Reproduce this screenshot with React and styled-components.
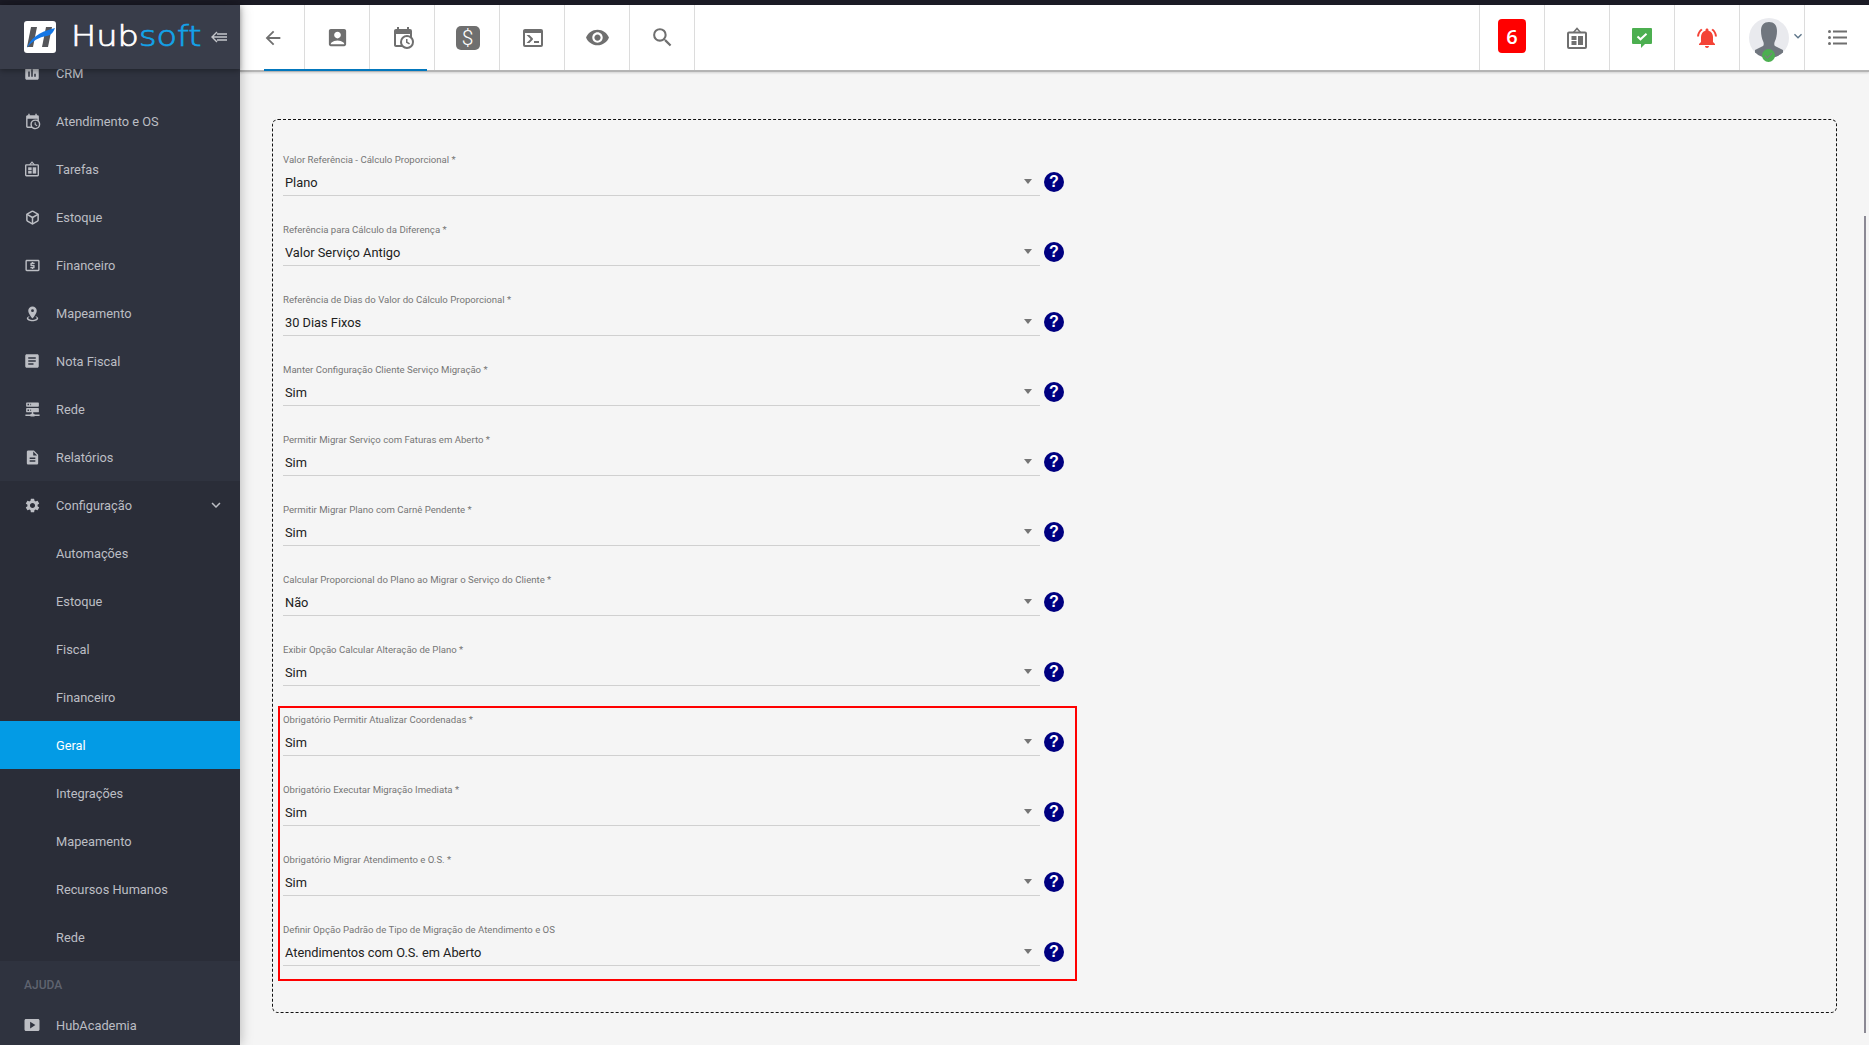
import React from 'react';
import styled, { createGlobalStyle } from 'styled-components';
import {
  MdAccountBox, MdArrowBack, MdArticle, MdDescription, MdInsertChart, MdKeyboardArrowDown,
  MdLocalAtm, MdNotificationsActive, MdSearch, MdSettings, MdSmartDisplay, MdVisibility,
} from 'react-icons/md';
import { Box } from 'lucide-react';

const GlobalStyle = createGlobalStyle`
  html, body {
    margin: 0;
    height: 100%;
    overflow: hidden;
    background: #f5f5f5;
    font-family: Roboto, sans-serif;
  }
  * { box-sizing: border-box; }
`;

const Page = styled.div`
  width: 1869px;
  height: 1045px;
  display: flex;
  flex-direction: column;
  overflow: hidden;
`;

const TopStrip = styled.div`
  height: 5px;
  flex: none;
  background: #1b1b25;
`;

const Body = styled.div`
  flex: 1;
  display: flex;
  min-height: 0;
`;

/* sidebar */
const Sidebar = styled.aside`
  width: 240px;
  flex: none;
  display: flex;
  flex-direction: column;
  background: #2f333f;
  box-shadow: 0 0 12px rgba(0, 0, 0, 0.28);
  position: relative;
  z-index: 2;
`;

const Brand = styled.div`
  height: 64px;
  flex: none;
  display: flex;
  align-items: center;
  padding-left: 24px;
  background: #393d4a;
  box-shadow: 0 2px 5px rgba(0, 0, 0, 0.3);
  position: relative;
  z-index: 1;
`;

const BrandName = styled.span`
  margin-left: 15px;
  width: 140px;
  flex: none;
  font-family: 'DejaVu Sans', sans-serif;
  font-weight: 200;
  font-size: 28px;
  line-height: 32px;
  color: #fff;
  white-space: nowrap;
  transform: scaleX(1.2);
  transform-origin: left center;
  -webkit-text-stroke: 0.7px currentColor;
`;

const BrandAccent = styled.span`
  color: #13a3ea;
`;

const Collapse = styled.svg`
  width: 16px;
  height: 12px;
  flex: none;
  fill: none;
  stroke: #c4c6cb;
  stroke-width: 1.4;
`;

const Scroller = styled.div`
  flex: 1;
  overflow: hidden;
`;

const NavList = styled.nav`
  margin-top: -20px;
`;

const NavItem = styled.div`
  height: 48px;
  display: flex;
  align-items: center;
  padding: 0 24px;
  font-size: 12.8px;
  color: ${(p) => (p.$active ? '#fff' : '#bcbec4')};
  background: ${(p) => (p.$active ? '#039be5' : 'transparent')};
`;

const NavIcon = styled.span`
  width: 16px;
  height: 16px;
  margin-right: 16px;
  flex: none;
  display: flex;
  align-items: center;
  justify-content: center;
  color: #bcbec4;
  svg { flex: none; }
`;

const NavLabel = styled.span`
  flex: 1;
`;

const NavChevron = styled(MdKeyboardArrowDown)`
  margin-right: -9px;
  color: #bcbec4;
`;

const SubMenu = styled.div`
  background: #2a2d38;
`;

const SubItem = styled(NavItem)`
  padding-left: 56px;
`;

const SectionTitle = styled.div`
  height: 40px;
  padding: 8px 24px 0;
  display: flex;
  align-items: center;
  font-size: 12px;
  font-weight: 500;
  color: #5f636f;
`;

/* toolbar */
const Content = styled.div`
  flex: 1;
  min-width: 0;
  display: flex;
  flex-direction: column;
  position: relative;
`;

const Toolbar = styled.header`
  height: 67px;
  flex: none;
  display: flex;
  justify-content: space-between;
  background: #fff;
  border-bottom: 2px solid #b4b4b4;
  box-shadow: 0 1px 2px rgba(0, 0, 0, 0.15);
  position: relative;
`;

const ToolGroup = styled.div`
  display: flex;
  border-left: ${(p) => (p.$right ? '1px solid #dcdcdc' : 'none')};
`;

const ToolCell = styled.div`
  width: ${(p) => (p.$last ? '64px' : '65px')};
  padding-left: ${(p) => (p.$flush ? '0' : '1px')};
  display: flex;
  align-items: center;
  justify-content: center;
  color: #6f6f6f;
  border-right: ${(p) => (p.$last ? 'none' : '1px solid #dcdcdc')};
  position: relative;
`;

const ActiveLine = styled.div`
  position: absolute;
  left: 24px;
  bottom: -1px;
  width: 163px;
  height: 2px;
  background: #0277bd;
`;

const DollarBox = styled.span`
  width: 24px;
  height: 24px;
  border-radius: 5px;
  background: #6f6f6f;
  color: #fff;
  font-size: 21px;
  font-weight: 300;
  display: flex;
  align-items: center;
  justify-content: center;
`;

const CountBadge = styled.span`
  width: 28px;
  height: 34px;
  margin-top: -3px;
  border-radius: 4px;
  background: #ff0000;
  color: #fff;
  font-family: 'Open Sans', sans-serif;
  font-size: 20px;
  font-weight: 600;
  display: flex;
  align-items: center;
  justify-content: center;
`;

const Avatar = styled.span`
  width: 40px;
  height: 40px;
  border-radius: 50%;
  background: #e9eaee;
  overflow: hidden;
  display: block;
`;

const AvatarWrap = styled.div`
  position: relative;
  width: 40px;
  height: 40px;
  margin-left: -6px;
`;

const OnlineDot = styled.span`
  position: absolute;
  left: 13px;
  bottom: -4px;
  width: 13px;
  height: 13px;
  border-radius: 50%;
  background: #4caf50;
  display: flex;
  align-items: center;
  justify-content: center;
`;

const AvatarCaret = styled(MdKeyboardArrowDown)`
  position: absolute;
  right: -2px;
  top: 23px;
  color: #5d7488;
`;

/* form */
const Main = styled.main`
  flex: 1;
  padding: 47px 32px 0;
  background: #f5f5f5;
`;

const DashedBox = styled.section`
  border: 1px dashed #111;
  border-radius: 6px;
  padding: 29px 10px 31px;
`;

const Stack = styled.div`
  display: flex;
  flex-direction: column;
  gap: 11px;
`;

const Highlight = styled(Stack)`
  width: 799px;
  margin: -3px 0 0 -5px;
  padding: 1px 3px 1px;
  border: 2px solid #f00;
`;

const FieldRow = styled.div`
  height: 59px;
  display: flex;
  align-items: flex-start;
  width: 790px;
`;

const Field = styled.div`
  width: 757px;
  height: 43px;
  margin-top: 4px;
  border-bottom: 1px solid #d0d0d0;
  flex: none;
`;

const FieldLabel = styled.div`
  font-size: 9.6px;
  line-height: 14px;
  color: #757575;
  white-space: nowrap;
`;

const FieldValue = styled.div`
  height: 28px;
  display: flex;
  align-items: center;
  justify-content: space-between;
  padding: 3px 8px 0 2px;
  font-size: 12.8px;
  color: #212121;
`;

const Caret = styled.span`
  width: 0;
  height: 0;
  margin-top: -3px;
  border-left: 4.5px solid transparent;
  border-right: 4.5px solid transparent;
  border-top: 5px solid #757575;
`;

const HelpButton = styled.span`
  width: 20px;
  height: 20px;
  margin: 23px 0 0 4px;
  border-radius: 50%;
  background: #000080;
  color: #fff;
  flex: none;
  font-family: 'Liberation Sans', sans-serif;
  font-size: 16px;
  font-weight: 700;
  line-height: 20px;
  text-align: center;
`;

const ScrollThumb = styled.div`
  position: absolute;
  right: 3px;
  top: 211px;
  width: 2px;
  height: 817px;
  background: #8b8994;
`;

const Mdi = ({ d, size = 16 }) => (
  <svg width={size} height={size} viewBox="0 0 24 24" fill="currentColor"><path d={d} /></svg>
);

const CALENDAR_CLOCK = 'M15,13H16.5V15.82L18.94,17.23L18.19,18.53L15,16.69V13M19,8H5V19H9.67C9.24,18.09 9,17.07 9,16A7,7 0 0,1 16,9C17.07,9 18.09,9.24 19,9.67V8M5,21C3.89,21 3,20.1 3,19V5C3,3.89 3.89,3 5,3H6V1H8V3H16V1H18V3H19A2,2 0 0,1 21,5V11.1C22.24,12.36 23,14.09 23,16A7,7 0 0,1 16,23C14.09,23 12.36,22.24 11.1,21H5M16,11A5,5 0 0,0 11,16A5,5 0 0,0 16,21A5,5 0 0,0 21,16A5,5 0 0,0 16,11Z';
const CONSOLE = 'M20,19V7H4V19H20M20,3A2,2 0 0,1 22,5V19A2,2 0 0,1 20,21H4A2,2 0 0,1 2,19V5C2,3.89 2.9,3 4,3H20M13,17V15H18V17H13M9.58,13L5.57,9H8.4L11.7,12.3C12.09,12.69 12.09,13.33 11.7,13.72L8.42,17H5.59L9.58,13Z';
const MAP_RADIUS = 'M12,2C15.31,2 18,4.66 18,7.95C18,12.41 12,19 12,19C12,19 6,12.41 6,7.95C6,4.66 8.69,2 12,2M12,6A2,2 0 0,0 10,8A2,2 0 0,0 12,10A2,2 0 0,0 14,8A2,2 0 0,0 12,6M20,19C20,21.21 16.42,23 12,23C7.58,23 4,21.21 4,19C4,17.71 5.22,16.56 7.11,15.83L7.75,16.74C6.67,17.19 6,17.81 6,18.5C6,19.88 8.69,21 12,21C15.31,21 18,19.88 18,18.5C18,17.81 17.33,17.19 16.25,16.74L16.89,15.83C18.78,16.56 20,17.71 20,19Z';
const SERVER_NETWORK = 'M13,18H14A1,1 0 0,1 15,19H22V21H15A1,1 0 0,1 14,22H10A1,1 0 0,1 9,21H2V19H9A1,1 0 0,1 10,18H11V16H4A1,1 0 0,1 3,15V11A1,1 0 0,1 4,10H20A1,1 0 0,1 21,11V15A1,1 0 0,1 20,16H13V18M4,2H20A1,1 0 0,1 21,3V7A1,1 0 0,1 20,8H4A1,1 0 0,1 3,7V3A1,1 0 0,1 4,2M9,6H10V4H9V6M9,14H10V12H9V14M5,4V6H7V4H5M5,12V14H7V12H5Z';

const BoardIcon = ({ size = 16 }) => (
  <svg width={size} height={size * 1.1} viewBox="0 0 20 22" fill="none" stroke="currentColor">
    <path d="M6.5 5.5 10 1.5l3.5 4" strokeWidth="1.6" />
    <rect x="1" y="5.5" width="18" height="15.5" rx="1" strokeWidth="2" />
    <rect x="4.5" y="9" width="5" height="4" fill="currentColor" stroke="none" />
    <rect x="4.5" y="14" width="5" height="4" fill="currentColor" stroke="none" />
    <rect x="11" y="9" width="5" height="9" fill="currentColor" stroke="none" />
  </svg>
);

const Logo = () => (
  <svg width="32" height="32" viewBox="0 0 32 32">
    <rect width="32" height="32" rx="3" fill="#fff" />
    <path d="M7 6h6l-4 20H3z" fill="#55565a" />
    <path d="M22 6h6l-4 20h-6z" fill="#55565a" />
    <path d="M3 27C6 18 14 11 31 7c-2 5-4 7-8 8-8 1-15 5-20 12z" fill="#1477e6" />
  </svg>
);

const ChatCheck = () => (
  <svg width="20" height="20" viewBox="0 0 20 20">
    <path d="M0 1a1 1 0 0 1 1-1h18a1 1 0 0 1 1 1v14a1 1 0 0 1-1 1h-6l-4 4v-4H1a1 1 0 0 1-1-1z" fill="#4caf50" />
    <path d="m5.5 8.5 3 2.8 6-5.6" fill="none" stroke="#fff" strokeWidth="2" />
  </svg>
);

const Silhouette = () => (
  <svg width="40" height="40" viewBox="0 0 40 40" fill="#70767e">
    <path d="M12 13c0-6 3-9 8-9s8 3 8 9c0 4-1 8-2 10-1 2-1 4 0 5l8 4v8H6v-8l8-4c1-1 1-3 0-5-1-2-2-6-2-10z" />
  </svg>
);

const ListIcon = () => (
  <svg width="19" height="15" viewBox="0 0 19 15" fill="#6f6f6f">
    <circle cx="1.5" cy="1.5" r="1.5" />
    <circle cx="1.5" cy="7.5" r="1.5" />
    <circle cx="1.5" cy="13.5" r="1.5" />
    <rect x="5" y="0.5" width="14" height="2" />
    <rect x="5" y="6.5" width="14" height="2" />
    <rect x="5" y="12.5" width="14" height="2" />
  </svg>
);

const mainNav = [
  { label: 'CRM', icon: <MdInsertChart size={18} /> },
  { label: 'Atendimento e OS', icon: <Mdi d={CALENDAR_CLOCK} size={17} /> },
  { label: 'Tarefas', icon: <BoardIcon size={14} /> },
  { label: 'Estoque', icon: <Box size={15} strokeWidth={2.4} /> },
  { label: 'Financeiro', icon: <MdLocalAtm size={17} /> },
  { label: 'Mapeamento', icon: <Mdi d={MAP_RADIUS} size={17} /> },
  { label: 'Nota Fiscal', icon: <MdArticle size={18} /> },
  { label: 'Rede', icon: <Mdi d={SERVER_NETWORK} size={17} /> },
  { label: 'Relatórios', icon: <MdDescription size={17} /> },
];

const subNav = ['Automações', 'Estoque', 'Fiscal', 'Financeiro', 'Geral', 'Integrações', 'Mapeamento', 'Recursos Humanos', 'Rede'];

const fields = [
  ['Valor Referência - Cálculo Proporcional *', 'Plano'],
  ['Referência para Cálculo da Diferença *', 'Valor Serviço Antigo'],
  ['Referência de Dias do Valor do Cálculo Proporcional *', '30 Dias Fixos'],
  ['Manter Configuração Cliente Serviço Migração *', 'Sim'],
  ['Permitir Migrar Serviço com Faturas em Aberto *', 'Sim'],
  ['Permitir Migrar Plano com Carnê Pendente *', 'Sim'],
  ['Calcular Proporcional do Plano ao Migrar o Serviço do Cliente *', 'Não'],
  ['Exibir Opção Calcular Alteração de Plano *', 'Sim'],
];

const requiredFields = [
  ['Obrigatório Permitir Atualizar Coordenadas *', 'Sim'],
  ['Obrigatório Executar Migração Imediata *', 'Sim'],
  ['Obrigatório Migrar Atendimento e O.S. *', 'Sim'],
  ['Definir Opção Padrão de Tipo de Migração de Atendimento e OS', 'Atendimentos com O.S. em Aberto'],
];

const SelectField = ({ label, value }) => (
  <FieldRow>
    <Field>
      <FieldLabel>{label}</FieldLabel>
      <FieldValue>
        {value}
        <Caret />
      </FieldValue>
    </Field>
    <HelpButton>?</HelpButton>
  </FieldRow>
);

export default function App() {
  return (
    <Page>
      <GlobalStyle />
      <TopStrip />
      <Body>
        <Sidebar>
          <Brand>
            <Logo />
            <BrandName>Hub<BrandAccent>soft</BrandAccent></BrandName>
            <Collapse viewBox="0 0 16 12">
              <path d="M6 1 1 6l5 5M2 6h14M6 3h10M6 9h10" />
            </Collapse>
          </Brand>
          <Scroller>
            <NavList>
              {mainNav.map((item) => (
                <NavItem key={item.label}>
                  <NavIcon>{item.icon}</NavIcon>
                  <NavLabel>{item.label}</NavLabel>
                </NavItem>
              ))}
              <SubMenu>
                <NavItem>
                  <NavIcon><MdSettings size={17} /></NavIcon>
                  <NavLabel>Configuração</NavLabel>
                  <NavChevron size={18} />
                </NavItem>
                {subNav.map((label) => (
                  <SubItem key={label} $active={label === 'Geral'}>{label}</SubItem>
                ))}
              </SubMenu>
              <SectionTitle>AJUDA</SectionTitle>
              <NavItem>
                <NavIcon><MdSmartDisplay size={18} /></NavIcon>
                <NavLabel>HubAcademia</NavLabel>
              </NavItem>
            </NavList>
          </Scroller>
        </Sidebar>
        <Content>
          <Toolbar>
            <ToolGroup>
              <ToolCell><MdArrowBack size={22} /></ToolCell>
              <ToolCell><MdAccountBox size={23} /></ToolCell>
              <ToolCell><Mdi d={CALENDAR_CLOCK} size={24} /></ToolCell>
              <ToolCell><DollarBox>$</DollarBox></ToolCell>
              <ToolCell><Mdi d={CONSOLE} size={24} /></ToolCell>
              <ToolCell><MdVisibility size={25} /></ToolCell>
              <ToolCell><MdSearch size={25} /></ToolCell>
            </ToolGroup>
            <ToolGroup $right>
              <ToolCell $flush><CountBadge>6</CountBadge></ToolCell>
              <ToolCell $flush><BoardIcon size={20} /></ToolCell>
              <ToolCell $flush><ChatCheck /></ToolCell>
              <ToolCell $flush><MdNotificationsActive size={24} color="#f44336" /></ToolCell>
              <ToolCell $flush>
                <AvatarWrap>
                  <Avatar><Silhouette /></Avatar>
                  <OnlineDot>
                    <svg width="9" height="9" viewBox="0 0 9 9"><path d="m1 4.5 2.5 2.5L8 2" fill="none" stroke="#79807f" strokeWidth="1.2" /></svg>
                  </OnlineDot>
                </AvatarWrap>
                <AvatarCaret size={16} />
              </ToolCell>
              <ToolCell $flush $last><ListIcon /></ToolCell>
            </ToolGroup>
            <ActiveLine />
          </Toolbar>
          <Main>
            <DashedBox>
              <Stack>
                {fields.map(([label, value]) => (
                  <SelectField key={label} label={label} value={value} />
                ))}
                <Highlight>
                  {requiredFields.map(([label, value]) => (
                    <SelectField key={label} label={label} value={value} />
                  ))}
                </Highlight>
              </Stack>
            </DashedBox>
          </Main>
          <ScrollThumb />
        </Content>
      </Body>
    </Page>
  );
}
